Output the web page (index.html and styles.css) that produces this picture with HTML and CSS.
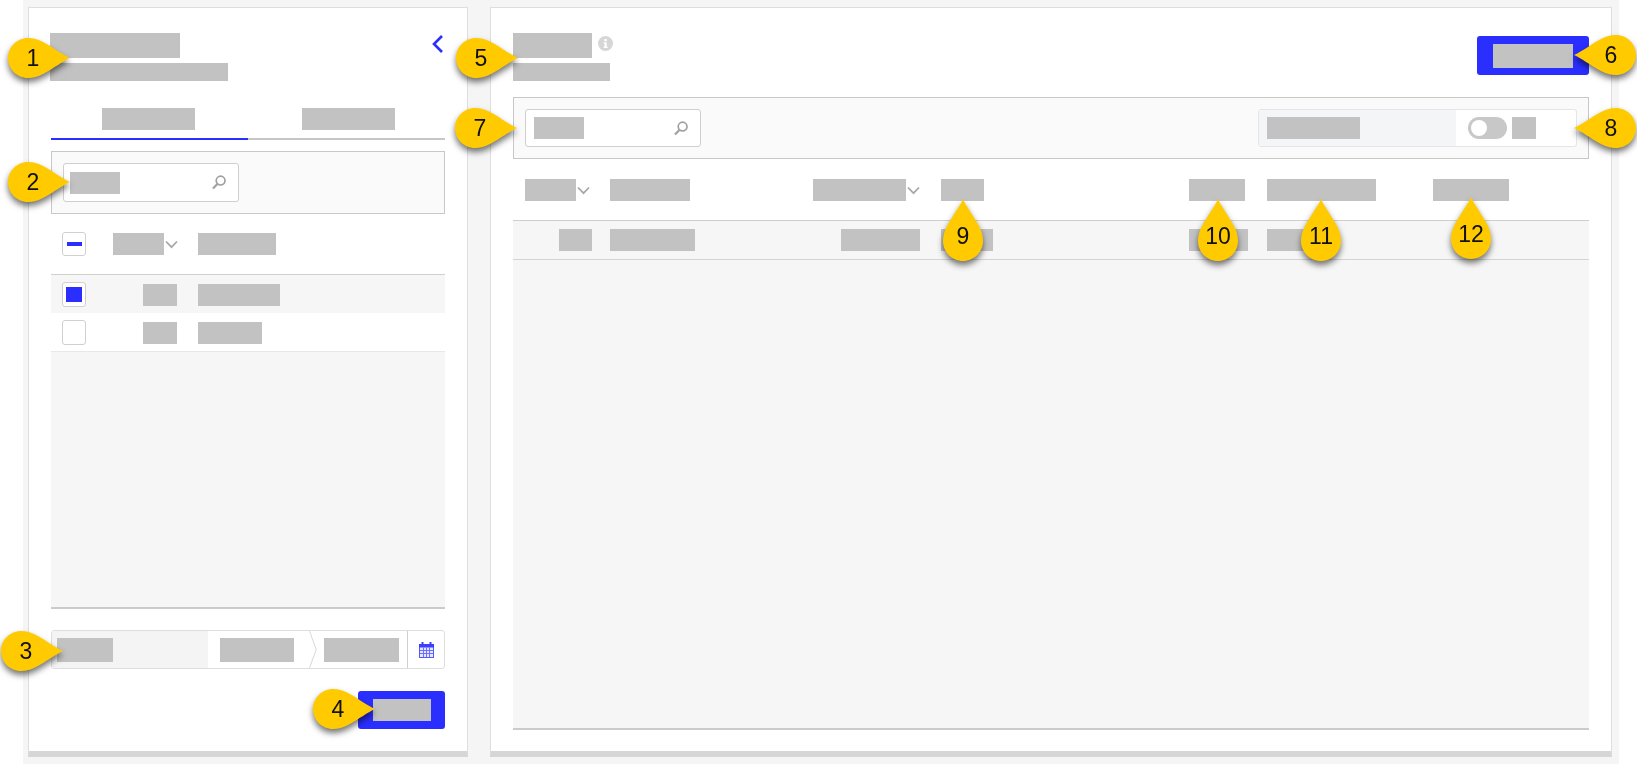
FILE: index.html
```html
<!DOCTYPE html>
<html lang="en">
<head>
<meta charset="utf-8">
<title>Annotated screen</title>
<link rel="stylesheet" href="styles.css">
</head>
<body>
<div class="stage">

  <section class="card card-left">
    <header class="head">
      <div>
        <div class="block title-block w130 shift-left"></div>
        <div class="block sub-block w178 shift-left"></div>
      </div>
      <svg class="back" width="11" height="18" viewBox="0 0 11 18"><path d="M10 1 2 9 10 17" fill="none" stroke="#2a2eff" stroke-width="2.6"/></svg>
    </header>

    <div class="tabs">
      <div class="tab tab-active"><div class="block w93 tab-nudge-a"></div></div>
      <div class="tab"><div class="block w93 tab-nudge"></div></div>
    </div>

    <div class="toolbar toolbar-left">
      <div class="search">
        <div class="block w50"></div>
        <svg class="search-icon" width="14" height="15" viewBox="0 0 14 15"><circle cx="8.6" cy="5.6" r="4.4" fill="none" stroke="#a0a0a0" stroke-width="1.7"/><path d="M5.400 9 1 13.600" stroke="#a0a0a0" stroke-width="2.200" fill="none"/></svg>
      </div>
    </div>

    <div class="l-grid l-head">
      <div class="check"><span class="minus"></span></div>
      <div class="cell-end"><div class="block w51"></div><svg class="chev chev-l" width="13" height="9" viewBox="0 0 13 9"><path d="M1 1.500 6.500 7.200 12 1.500" fill="none" stroke="#a8a8a8" stroke-width="1.800"/></svg></div>
      <div class="cell-name"><div class="block w78"></div></div>
    </div>

    <div class="l-body">
      <div class="l-grid l-row l-row-first">
        <div class="check check-row"><span class="tick"></span></div>
        <div class="cell-end"><div class="block w34"></div></div>
        <div class="cell-name"><div class="block w82"></div></div>
      </div>
      <div class="l-grid l-row l-row-second">
        <div class="check check-row"></div>
        <div class="cell-end"><div class="block w34"></div></div>
        <div class="cell-name"><div class="block w64"></div></div>
      </div>
    </div>

    <div class="date">
      <div class="date-label"><div class="block block-tall w56"></div></div>
      <div class="date-range">
        <div class="block block-tall w74"></div>
        <svg class="date-sep" width="8" height="37" viewBox="0 0 8 37"><path d="M.5 0 7.200 18.500.5 37" fill="none" stroke="#d8d8d8"/></svg>
        <div class="block block-tall w75"></div>
      </div>
      <div class="date-cal">
        <svg width="15" height="16" viewBox="0 0 15 16">
          <rect x=".5" y="2.500" width="14" height="13" fill="#e4e5ff" stroke="#5558ff"/>
          <rect x="0" y="2" width="15" height="3.500" fill="#3a3eff"/>
          <rect x="2.500" y="0" width="2" height="4" fill="#3a3eff"/>
          <rect x="10.500" y="0" width="2" height="4" fill="#3a3eff"/>
          <path d="M4.500 5.500V15M7.500 5.500V15M10.500 5.500V15M1 8.500H14M1 11.500H14" stroke="#6c6fff" stroke-width="1"/>
        </svg>
      </div>
    </div>

    <div class="actions">
      <div class="btn btn-small"><div class="block w58"></div></div>
    </div>
  </section>

  <section class="card card-right">
    <header class="head">
      <div>
        <div class="title-line">
          <div class="block title-block w79"></div>
          <svg class="info" width="15" height="15" viewBox="0 0 15 15"><circle cx="7.500" cy="7.500" r="7.500" fill="#d6d6d6"/><rect x="6.300" y="3" width="2.400" height="2.200" fill="#fff"/><path d="M5.600 6.300H8.700V10.700H9.700V12H5.600V10.700H6.500V7.600H5.600Z" fill="#fff"/></svg>
        </div>
        <div class="block sub-block w97"></div>
      </div>
      <div class="btn btn-large"><div class="block block-tall w80"></div></div>
    </header>

    <div class="toolbar toolbar-right">
      <div class="search search-right">
        <div class="block w50"></div>
        <svg class="search-icon" width="14" height="15" viewBox="0 0 14 15"><circle cx="8.6" cy="5.6" r="4.4" fill="none" stroke="#a0a0a0" stroke-width="1.7"/><path d="M5.400 9 1 13.600" stroke="#a0a0a0" stroke-width="2.200" fill="none"/></svg>
      </div>
      <div class="switch-group">
        <div class="switch-label"><div class="block w93"></div></div>
        <div class="switch-value">
          <span class="toggle"><span class="knob"></span></span>
          <div class="block w24"></div>
        </div>
      </div>
    </div>

    <div class="r-grid r-head">
      <div class="cell-end col-first"><div class="block w51"></div><svg class="chev chev-a" width="13" height="9" viewBox="0 0 13 9"><path d="M1 1.500 6.500 7.200 12 1.500" fill="none" stroke="#a8a8a8" stroke-width="1.800"/></svg></div>
      <div><div class="block w80"></div></div>
      <div class="cell-end col-third"><div class="block w93"></div><svg class="chev chev-b" width="13" height="9" viewBox="0 0 13 9"><path d="M1 1.500 6.500 7.200 12 1.500" fill="none" stroke="#a8a8a8" stroke-width="1.800"/></svg></div>
      <div><div class="block w43"></div></div>
      <div><div class="block w56"></div></div>
      <div><div class="block w109"></div></div>
      <div><div class="block w76"></div></div>
    </div>

    <div class="r-body">
      <div class="r-grid r-row">
        <div class="cell-end col-first"><div class="block w33"></div></div>
        <div><div class="block w85"></div></div>
        <div class="cell-end col-third"><div class="block w79"></div></div>
        <div><div class="block w52"></div></div>
        <div><div class="block w59"></div></div>
        <div><div class="block w55"></div></div>
        <div></div>
      </div>
    </div>
  </section>
</div>

<div class="pin pin-r p1"><svg width="62" height="40" viewBox="0 0 62 40"><path class="drop" d="M62 20C55 23 46 30 35 36 30 38.700 25 40 20 40 9 40 0 31 0 20S9 0 20 0C25 0 30 1.300 35 4 46 10 55 17 62 20Z"/></svg><span class="num">1</span></div>
<div class="pin pin-r p2"><svg width="62" height="40" viewBox="0 0 62 40"><path class="drop" d="M62 20C55 23 46 30 35 36 30 38.700 25 40 20 40 9 40 0 31 0 20S9 0 20 0C25 0 30 1.300 35 4 46 10 55 17 62 20Z"/></svg><span class="num">2</span></div>
<div class="pin pin-r p3"><svg width="62" height="40" viewBox="0 0 62 40"><path class="drop" d="M62 20C55 23 46 30 35 36 30 38.700 25 40 20 40 9 40 0 31 0 20S9 0 20 0C25 0 30 1.300 35 4 46 10 55 17 62 20Z"/></svg><span class="num">3</span></div>
<div class="pin pin-r p4"><svg width="62" height="40" viewBox="0 0 62 40"><path class="drop" d="M62 20C55 23 46 30 35 36 30 38.700 25 40 20 40 9 40 0 31 0 20S9 0 20 0C25 0 30 1.300 35 4 46 10 55 17 62 20Z"/></svg><span class="num">4</span></div>
<div class="pin pin-r p5"><svg width="62" height="40" viewBox="0 0 62 40"><path class="drop" d="M62 20C55 23 46 30 35 36 30 38.700 25 40 20 40 9 40 0 31 0 20S9 0 20 0C25 0 30 1.300 35 4 46 10 55 17 62 20Z"/></svg><span class="num">5</span></div>
<div class="pin pin-l p6"><svg width="62" height="40" viewBox="0 0 62 40"><path class="drop" transform="matrix(-1 0 0 1 62 0)" d="M62 20C55 23 46 30 35 36 30 38.700 25 40 20 40 9 40 0 31 0 20S9 0 20 0C25 0 30 1.300 35 4 46 10 55 17 62 20Z"/></svg><span class="num">6</span></div>
<div class="pin pin-r p7"><svg width="62" height="40" viewBox="0 0 62 40"><path class="drop" d="M62 20C55 23 46 30 35 36 30 38.700 25 40 20 40 9 40 0 31 0 20S9 0 20 0C25 0 30 1.300 35 4 46 10 55 17 62 20Z"/></svg><span class="num">7</span></div>
<div class="pin pin-l p8"><svg width="62" height="40" viewBox="0 0 62 40"><path class="drop" transform="matrix(-1 0 0 1 62 0)" d="M62 20C55 23 46 30 35 36 30 38.700 25 40 20 40 9 40 0 31 0 20S9 0 20 0C25 0 30 1.300 35 4 46 10 55 17 62 20Z"/></svg><span class="num">8</span></div>
<div class="pin pin-u p9"><svg width="40" height="62" viewBox="0 0 40 62"><path class="drop" transform="matrix(0 -1 1 0 0 62)" d="M62 20C55 23 46 30 35 36 30 38.700 25 40 20 40 9 40 0 31 0 20S9 0 20 0C25 0 30 1.300 35 4 46 10 55 17 62 20Z"/></svg><span class="num">9</span></div>
<div class="pin pin-u p10"><svg width="40" height="62" viewBox="0 0 40 62"><path class="drop" transform="matrix(0 -1 1 0 0 62)" d="M62 20C55 23 46 30 35 36 30 38.700 25 40 20 40 9 40 0 31 0 20S9 0 20 0C25 0 30 1.300 35 4 46 10 55 17 62 20Z"/></svg><span class="num">10</span></div>
<div class="pin pin-u p11"><svg width="40" height="62" viewBox="0 0 40 62"><path class="drop" transform="matrix(0 -1 1 0 0 62)" d="M62 20C55 23 46 30 35 36 30 38.700 25 40 20 40 9 40 0 31 0 20S9 0 20 0C25 0 30 1.300 35 4 46 10 55 17 62 20Z"/></svg><span class="num">11</span></div>
<div class="pin pin-u p12"><svg width="40" height="62" viewBox="0 0 40 62"><path class="drop" transform="matrix(0 -1 1 0 0 62)" d="M62 20C55 23 46 30 35 36 30 38.700 25 40 20 40 9 40 0 31 0 20S9 0 20 0C25 0 30 1.300 35 4 46 10 55 17 62 20Z"/></svg><span class="num">12</span></div>
</body>
</html>
```
FILE: styles.css
```css
* { box-sizing: border-box; }

html, body {
  margin: 0;
  height: 764px;
  overflow: hidden;
  background: #fff;
  font-family: "Liberation Sans", Arial, sans-serif;
}

body { position: relative; }

.stage {
  display: flex;
  gap: 22px;
  width: 1596px;
  height: 764px;
  margin-left: 23px;
  padding: 7px 0 0 5px;
  background: #f5f5f5;
}

.card {
  height: 750px;
  padding: 25px 22px 0;
  background: #fff;
  border: 1px solid #dedede;
  border-bottom: 6px solid #d6d6d6;
}

.card-left { width: 440px; }
.card-right { width: 1122px; }

/* redaction blocks */
.block { height: 22px; background: #c2c2c2; flex: none; }
.block-tall { height: 24px; }
.title-block { height: 25px; }
.sub-block { height: 18px; margin-top: 5px; }
.shift-left { margin-left: -1px; }

.w24 { width: 24px; }
.w33 { width: 33px; }
.w34 { width: 34px; }
.w43 { width: 43px; }
.w50 { width: 50px; }
.w51 { width: 51px; }
.w52 { width: 52px; }
.w55 { width: 55px; }
.w56 { width: 56px; }
.w58 { width: 58px; }
.w59 { width: 59px; }
.w64 { width: 64px; }
.w74 { width: 74px; }
.w75 { width: 75px; }
.w76 { width: 76px; }
.w78 { width: 78px; }
.w79 { width: 79px; }
.w80 { width: 80px; }
.w82 { width: 82px; }
.w85 { width: 85px; }
.w93 { width: 93px; }
.w97 { width: 97px; }
.w109 { width: 109px; }
.w130 { width: 130px; }
.w178 { width: 178px; }

/* headers */
.head {
  display: flex;
  justify-content: space-between;
  align-items: flex-start;
  height: 48px;
}

.back { margin: 2px 2px 0 0; }

.title-line { display: flex; align-items: flex-start; }
.info { margin: 3px 0 0 6px; }

/* tabs */
.tabs { display: flex; margin-top: 27px; }

.tab {
  flex: 1;
  display: flex;
  justify-content: center;
  padding-bottom: 8px;
  border-bottom: 2px solid #c6c6c6;
}

.tab-active { border-bottom-color: #2a2eff; }
.tab-nudge { margin-left: 4px; }
.tab-nudge-a { margin-right: 2px; }

/* toolbars */
.toolbar {
  display: flex;
  justify-content: space-between;
  padding: 11px;
  background: #fafafa;
  border: 1px solid #c8c8c8;
}

.toolbar-left { height: 63px; margin-top: 11px; }
.toolbar-right { height: 62px; margin-top: 16px; }

.search {
  display: flex;
  align-items: center;
  justify-content: space-between;
  width: 176px;
  height: 39px;
  padding: 0 12px 0 6px;
  background: #fff;
  border: 1px solid #cfcfcf;
  border-radius: 3px;
}

.search-right { height: 38px; padding-left: 8px; }

.switch-group {
  display: flex;
  width: 319px;
  height: 38px;
  background: #fff;
  border: 1px solid #e3e5e8;
  border-radius: 3px;
}

.switch-label {
  display: flex;
  align-items: center;
  width: 197px;
  padding-left: 8px;
  background: #f4f5f7;
}

.switch-value {
  display: flex;
  align-items: center;
  gap: 5px;
  padding-left: 12px;
}

.toggle {
  display: block;
  width: 39px;
  height: 22px;
  padding: 3px;
  background: #c8c8c8;
  border-radius: 11px;
}

.knob {
  display: block;
  width: 16px;
  height: 16px;
  background: #fff;
  border-radius: 50%;
}

/* left table */
.l-grid {
  display: grid;
  grid-template-columns: 24px 91px 1fr;
  padding-left: 11px;
}

.l-head { height: 60px; align-items: center; }

.l-body {
  height: 335px;
  background: #f6f6f6;
  border-top: 1px solid #cfcfcf;
  border-bottom: 2px solid #cbcbcb;
}

.l-row { padding-top: 9px; }
.l-row-first { height: 38px; }
.l-row-second {
  height: 39px;
  background: #fff;
  border-bottom: 1px solid #e8e8e8;
}

.cell-end { display: flex; justify-content: flex-end; align-items: center; }
.l-row .cell-end, .r-row .cell-end { align-items: flex-start; }
.cell-name { padding-left: 21px; }
.chev { flex: none; }
.chev-l { margin: 0 -1px 0 1px; }

.check {
  display: flex;
  align-items: center;
  justify-content: center;
  width: 24px;
  height: 24px;
  background: #fff;
  border: 1px solid #d0d0d0;
  border-radius: 3px;
}

.check-row { height: 25px; margin-top: -2px; }
.minus { width: 15px; height: 4px; background: #2a2eff; }
.tick { width: 16px; height: 15px; background: #2a2eff; }

/* date field */
.date {
  display: flex;
  height: 39px;
  margin-top: 21px;
  background: #fff;
  border: 1px solid #dedede;
  border-radius: 3px;
}

.date-label {
  display: flex;
  align-items: center;
  width: 156px;
  padding-left: 5px;
  background: #f4f4f4;
}

.date-range {
  display: flex;
  align-items: center;
  width: 199px;
  padding-left: 12px;
}

.date-sep { flex: none; margin: 0 7px 0 15px; }

.date-cal {
  flex: 1;
  display: flex;
  align-items: center;
  justify-content: center;
  border-left: 1px solid #d0d0d0;
}

/* buttons */
.actions { display: flex; justify-content: flex-end; margin-top: 22px; }

.btn {
  display: flex;
  align-items: center;
  justify-content: center;
  background: #2a2eff;
  border-radius: 3px;
}

.btn-small { width: 87px; height: 38px; }
.btn-large { width: 112px; height: 39px; margin-top: 3px; }

/* right table */
.r-grid {
  display: grid;
  grid-template-columns: 97px 203px 128px 248px 78px 166px 1fr;
}

.r-head { height: 61px; padding-top: 20px; align-items: start; }

.r-body {
  height: 510px;
  background: #f6f6f6;
  border-top: 1px solid #cfcfcf;
  border-bottom: 2px solid #cbcbcb;
}

.r-row {
  height: 39px;
  padding-top: 8px;
  border-bottom: 1px solid #d4d4d4;
}

.col-first { padding-right: 18px; }
.col-third { padding-right: 21px; }
.chev-a { margin: 0 2px 0 1px; }
.chev-b { margin: 0 0 0 1px; }

/* numbered callout pins */
.pin {
  position: absolute;
  filter: drop-shadow(0 4px 3px rgba(0, 0, 0, .55));
}

.pin svg { display: block; }
.drop { fill: #ffcb00; }

.num {
  position: absolute;
  width: 40px;
  font-size: 23px;
  line-height: 24px;
  text-align: center;
  color: #111;
}

.pin-r { width: 62px; height: 40px; }
.pin-r .num { left: 5px; top: 8px; }
.pin-l { width: 62px; height: 40px; }
.pin-l .num { right: 5px; top: 8px; }
.pin-u { width: 40px; height: 62px; }
.pin-u .num { left: 0; bottom: 13px; }

.p1 { left: 8px; top: 38px; }
.p2 { left: 8px; top: 162px; }
.p3 { left: 1px; top: 631px; }
.p4 { left: 313px; top: 689px; }
.p5 { left: 456px; top: 38px; }
.p6 { left: 1574px; top: 35px; }
.p7 { left: 455px; top: 108px; }
.p8 { left: 1574px; top: 108px; }
.p9 { left: 943px; top: 199px; }
.p10 { left: 1198px; top: 199px; }
.p11 { left: 1301px; top: 199px; }
.p12 { left: 1451px; top: 197px; }
```
